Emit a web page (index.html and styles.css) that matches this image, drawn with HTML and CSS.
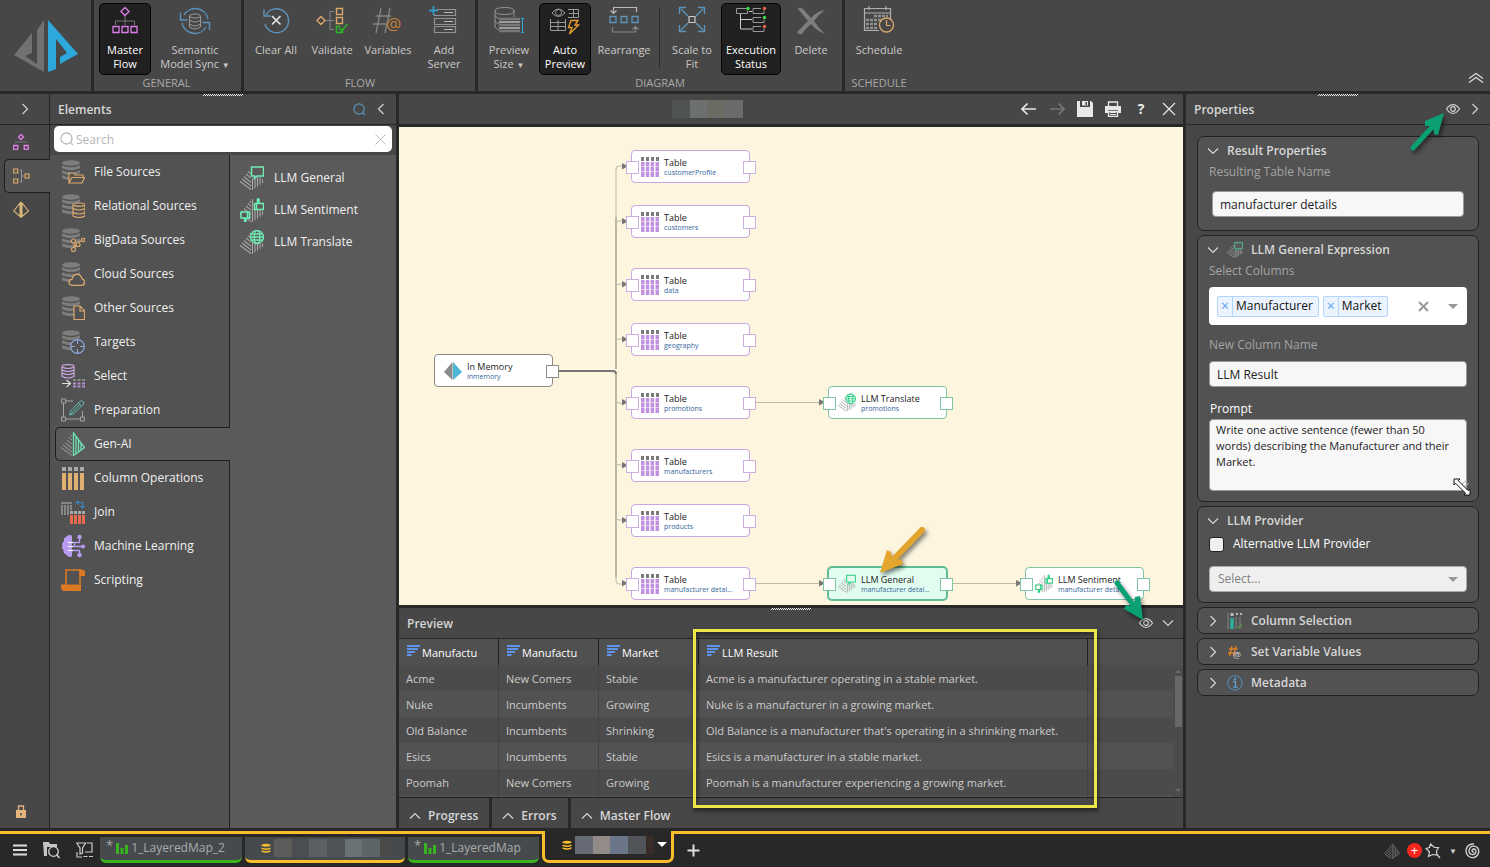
FILE: index.html
```html
<!DOCTYPE html>
<html lang="en">
<head>
<meta charset="utf-8">
<title>Data Flow</title>
<link rel="stylesheet" href="styles.css">
</head>
<body>
<svg class="defs" aria-hidden="true">
  <symbol id="db" viewBox="0 0 24 24"><g fill="#7d7d7d"><ellipse cx="10" cy="3" rx="9" ry="2.8"/><path d="M1 5.2q9 4 18 0v3q-9 4-18 0zM1 10.2q9 4 18 0v3q-9 4-18 0zM1 15.2q9 4 18 0v3q-9 4-18 0z"/></g></symbol>
  <symbol id="pyr" viewBox="0 0 24 24"><g stroke="#a5a5a5" stroke-width="1.1" fill="none"><path d="M0 15.500l11 8M2 13l9 7M4 10.700l7 5.500M6 8l5 4.200M8 5.400l3 2.800M9.700 3l1.500 1.500"/><path d="M12.500 1v23M15 10v12.200M17.500 10v10.600M20 11v7.700M22.500 13.500v3.600"/></g></symbol>
  <symbol id="pyr-full" viewBox="0 0 24 24"><g stroke="#8d8d8d" stroke-width="1.1" fill="none"><path d="M0 15.500l11 8M2 13l9 7M4 10.700l7 5.500M6 8l5 4.200M8 5.400l3 2.800M9.700 3l1.500 1.500"/></g><path d="M12.500 1v22.500l11-8zM15 4.500v17M17.500 8v11.500M20 11v6.500" fill="none" stroke="currentColor" stroke-width="1.3"/></symbol>
  <symbol id="i-general" viewBox="0 0 24 24"><g stroke="#a5a5a5" stroke-width="1.100" fill="none"><path d="M0 15.500l11 8M2 13l9 7M4 10.700l7 5.500M6 8l5 4.200M8 5.400l3 2.800"/><path d="M12.500 12v12M15 13v9.200M17.500 11v9.600M20 11v7.700M22.500 13.500v3.600"/></g><path d="M11.500 1h12v9h-6.500l-2.500 2.500V10h-3z" fill="var(--node,#5a5a5a)" stroke="currentColor" stroke-width="1.500"/></symbol>
  <symbol id="i-sentiment" viewBox="0 0 24 24"><use href="#pyr"/><path d="M14.500 5.500h3V1h1.500v4.500h4.500v6h-9zM1 14h8.500v6H6v3.500H4.500V20H1zM7.500 14v6M16.500 5.500v6" fill="var(--node,#5a5a5a)" stroke="currentColor" stroke-width="1.500"/></symbol>
  <symbol id="i-translate" viewBox="0 0 24 24"><use href="#pyr"/><circle cx="17" cy="7" r="6.500" fill="var(--node,#5a5a5a)"/><g fill="none" stroke="currentColor" stroke-width="1.300"><circle cx="17" cy="7" r="6.500"/><ellipse cx="17" cy="7" rx="2.800" ry="6.500"/><path d="M10.500 7h13M11.500 4h11M11.500 10h11"/></g></symbol>
  <symbol id="i-table" viewBox="0 0 18 20"><path d="M0 0h3v4H0zM5 0h3v4H5zM10 0h3v4h-3zM15 0h3v4h-3z" fill="#7a7a7a"/><path d="M0 5h3.500v15H0zM4.800 5h3.500v15H4.800zM9.600 5h3.500v15H9.600zM14.500 5H18v15h-3.500z" fill="#c092df"/><path d="M0 9.500h18M0 14.500h18" stroke="#fff" stroke-width=".5"/></symbol>
  <symbol id="i-eye" viewBox="0 0 14 10"><path d="M.500 5Q3.500.600 7 .600T13.500 5Q10.500 9.400 7 9.400T.500 5z" fill="none" stroke="currentColor" stroke-width="1.200"/><circle cx="7" cy="5" r="2.300" fill="none" stroke="currentColor" stroke-width="1.200"/></symbol>
  <symbol id="c-right" viewBox="0 0 12 12"><path d="M3.500 1l5 5-5 5" fill="none" stroke="currentColor" stroke-width="1.200"/></symbol>
  <symbol id="c-left" viewBox="0 0 12 12"><path d="M8.500 1l-5 5 5 5" fill="none" stroke="currentColor" stroke-width="1.200"/></symbol>
  <symbol id="c-down" viewBox="0 0 12 12"><path d="M1 3.500l5 5 5-5" fill="none" stroke="currentColor" stroke-width="1.200"/></symbol>
  <symbol id="c-up" viewBox="0 0 12 12"><path d="M1 8.500l5-5 5 5" fill="none" stroke="currentColor" stroke-width="1.200"/></symbol>
  <symbol id="i-sort" viewBox="0 0 14 12"><path d="M0 1h13M0 4h11M0 7h8M0 10h4.500" stroke="#5d93ea" stroke-width="2"/></symbol>
  <symbol id="i-glass" viewBox="0 0 14 14"><path d="M10.500 10.500L13 13M6.500 1a5.500 5.500 0 1 0 0 11 5.500 5.500 0 0 0 0-11z" fill="none" stroke="currentColor" stroke-width="1.300"/></symbol>
  <symbol id="i-coins" viewBox="0 0 10 10"><path d="M.500 1.800q4.500-2.200 9 0v1q-4.500 2-9 0zM.500 4.500q4.500 2 9 0v1.500q-4.500 2-9 0zM.500 7.300q4.500 2 9 0v1.500q-4.500 2-9 0z" fill="#fcbf2b"/></symbol>
  <symbol id="i-bars" viewBox="0 0 12 12"><path d="M0 1h3v11H0zM4.500 6h3v6h-3zM9 3h3v9H9z" fill="#37b41f"/></symbol>
</svg>

<div class="app">
  <header class="ribbon">
    <div class="brand">
      <svg width="64" height="52" viewBox="0 0 64 52"><path d="M30 0v52L0 35l18-22v20l-7 3 12 8V10z" fill="#6f7173"/><path d="M34 0l30 34-18 10v-7l7-4-11-14v30l-8 3z" fill="#2ea8da"/></svg>
    </div>
    <section class="group general">
      <div class="tools">
        <button class="tool on w52"><svg width="30" height="30" viewBox="0 0 30 30" fill="none"><path d="M15 10v5M5.500 19v-4h19v4M15 14v5" stroke="#777"/><g stroke="#df7eea" stroke-width="1.300"><path d="M15 1.500l4 4-4 4-4-4zM3 20.500h6v6H3zM12 20.500h6v6h-6zM21 20.500h6v6h-6z"/></g></svg><span>Master Flow</span></button>
        <button class="tool w78"><svg width="32" height="30" viewBox="0 0 32 30" fill="none"><g stroke="#5d93bb" stroke-width="1.400"><path d="M5 9A13 13 0 0 1 29 13M1.500 6.500V14h7M27 21A13 13 0 0 1 3 17M30.500 24v-7.500h-7"/></g><g stroke="#999"><ellipse cx="16" cy="10" rx="5.500" ry="2"/><path d="M10.500 10v11q5.500 4 11 0V10M10.500 14q5.500 4 11 0M10.500 18q5.500 4 11 0"/></g></svg><span>Semantic Model Sync&nbsp;<i class="tri">▼</i></span></button>
      </div>
      <h2>GENERAL</h2>
    </section>
    <section class="group flow">
      <div class="tools">
        <button class="tool w56"><svg width="28" height="30" viewBox="0 0 28 30" fill="none"><path d="M4 9A12 12 0 1 1 3 18M2 3.500V10h7" stroke="#5d93bb" stroke-width="1.400"/><path d="M10 10l8.500 8.500M18.500 10L10 18.500" stroke="#e8e8e8" stroke-width="1.600"/></svg><span>Clear All</span></button>
        <button class="tool w56"><svg width="32" height="30" viewBox="0 0 32 30" fill="none"><path d="M18 5.500h-4v18h4M10 14.500h8" stroke="#858585"/><path d="M5 10.500l4 4-4 4-4-4zM20.500 2.500h6v6h-6zM20.500 11.500h6v6h-6z" stroke="#dca96c" stroke-width="1.400"/><path d="M26.500 22v4.500h-6v-6h4M23 22l2.500 3 6-7" stroke="#2bb42b" stroke-width="1.500"/></svg><span>Validate</span></button>
        <button class="tool w56"><svg class="hash" width="32" height="30" viewBox="0 0 32 30" fill="none"><path d="M9 2L4 27M18 2l-5 25M3.500 10H19M1 18h13" stroke="#858585" stroke-width="1.300"/><text x="14" y="24" font-size="17" fill="#c8803c">@</text></svg><span>Variables</span></button>
        <button class="tool w56"><svg width="30" height="30" viewBox="0 0 30 30" fill="none"><path d="M8 3.500h18.500v6h-21V8M5.500 12.500h21v6h-21zM5.500 20.500h21v6h-21z" stroke="#929292" stroke-width="1.200"/><path d="M15 6.500h9M15 15.500h9M15 23.500h9" stroke="#bbb"/><path d="M4.500 0v9M0 4.500h9" stroke="#2ea8da" stroke-width="1.500"/></svg><span>Add Server</span></button>
      </div>
      <h2>FLOW</h2>
    </section>
    <section class="group diagram">
      <div class="tools">
        <button class="tool w56"><svg width="30" height="30" viewBox="0 0 30 30" fill="none"><path d="M1 5v16q2 3 4 3M1 9.500q1 2 4 3M1 15q1 2 4 3M20 4v7M1 5q0-3.500 9.500-3.500T20 5q0 3.500-9.500 3.500T1 5z" stroke="#929292"/><path d="M5 13h21M5 19h21M5 25h21" stroke="#777" stroke-width="2.500"/><path d="M5 16h21M5 22h21" stroke="#bbb" stroke-width="1.500"/><path d="M27 12.500h3M27 26.500h3M28.500 12.500v14" stroke="#2ea8da"/></svg><span>Preview Size&nbsp;<i class="tri">▼</i></span></button>
        <button class="tool on w52"><svg width="30" height="30" viewBox="0 0 30 30" fill="none"><g stroke="#9b9b9b"><path d="M2 7Q8-1 15 7 8 14 2 7z"/><circle cx="8.500" cy="6.500" r="3"/><path d="M18 3.500h10.500v8H18M19 7.500h9.500M23.500 3.500v8M.500 13v11.500h15V13M.500 16.500h15M.500 20.500h15M8 14v10.500"/></g><path d="M21 14.500h7l-3 4.500h3.500l-9 9 2.500-6.500h-3.500z" stroke="#e39a2e" stroke-width="1.400"/></svg><span>Auto Preview</span></button>
        <button class="tool w62"><svg width="30" height="30" viewBox="0 0 30 30" fill="none"><path d="M27.500 6V1.500h-23V7M1.500 4.500l3 3 3-3" stroke="#bbb" stroke-width="1.200"/><path d="M3.500 21v5h23v-5M23.500 23.500l3-3 3 3" stroke="#858585" stroke-width="1.200"/><path d="M1 10.500h6v6H1zM12 10.500h6v6h-6zM23 10.500h6v6h-6z" stroke="#5d93bb" stroke-width="1.300"/></svg><span>Rearrange</span></button>
        <hr class="split">
        <button class="tool w54"><svg width="28" height="30" viewBox="0 0 28 30" fill="none"><path d="M1.500 8V1.500H8M20 1.500h6.500V8M1.500 19v6.500H8M20 25.500h6.500V19M3 3l7 7M25 3l-7 7M3 24l7-7M25 24l-7-7" stroke="#5d93bb" stroke-width="1.400"/><path d="M11 10.500h6v6h-6z" stroke="#ccc" stroke-width="1.200"/></svg><span>Scale to Fit</span></button>
        <button class="tool on w60"><svg width="32" height="30" viewBox="0 0 32 30" fill="none"><path d="M12 2.500H1.500v5h11v-3M26 2.500h-8v5h11v-3M26 11.500h-8v5h11v-3M26 20.500h-8v5h11v-3" stroke="#999"/><path d="M5.500 8v15H17M5.500 13.500H17M14 5.500h3" stroke="#ccc"/><circle cx="13" cy="2.500" r="1.700" fill="#3ddb4a"/><circle cx="29.500" cy="2.500" r="1.700" fill="#ec6548"/><circle cx="29.500" cy="11.500" r="1.700" fill="#3ddb4a"/><circle cx="29.500" cy="20.500" r="1.700" fill="#ec6548"/></svg><span>Execution Status</span></button>
        <button class="tool w56"><svg width="30" height="30" viewBox="0 0 30 30"><path d="M2 3q1-3 5 0l8 9Q21 5 29 4q-6 4-11 11 5 8 11 13-8-3-14-10-6 5-9 10-4 1-5-2Q7 20 12 15z" fill="#7e7e7e"/></svg><span>Delete</span></button>
      </div>
      <h2>DIAGRAM</h2>
    </section>
    <section class="group schedule">
      <div class="sched">
      <div class="tools">
        <button class="tool w60"><svg width="32" height="30" viewBox="0 0 32 30" fill="none"><path d="M16 24.500H1.500v-22h26V14M1.500 7h26M6 0v4M23 0v4" stroke="#b0b0b0" stroke-width="1.200"/><path d="M11 10h14M3 14h20M3 18h12M3 22h12" stroke="#909090" stroke-width="2.500" stroke-dasharray="3 1"/><circle cx="23.500" cy="19" r="7" fill="#474747" stroke="#dca96c" stroke-width="1.300"/><path d="M23.500 14v5.500h4" stroke="#dca96c" stroke-width="1.200"/></svg><span>Schedule</span></button>
      </div>
      <h2>SCHEDULE</h2>
      </div>
      <button class="icon collapse" aria-label="Collapse ribbon"><svg width="16" height="12" viewBox="0 0 16 12"><path d="M1 6.500l7-5 7 5M1 10.500l7-5 7 5" fill="none" stroke="#ddd" stroke-width="1.200"/></svg></button>
    </section>
  </header>

  <main class="work">
    <nav class="rail">
      <button class="icon rail-top" aria-label="Expand"><svg width="12" height="12"><use href="#c-right"/></svg></button>
      <button class="icon rail-item" aria-label="Master flow"><svg width="16" height="16" viewBox="0 0 16 16" fill="none"><path d="M2.500 9V8h11v1" stroke="#777"/><path d="M8 .500l2.500 2.500L8 5.500 5.500 3zM.700 11.500h4v4h-4zM11.200 11.500h4v4h-4z" stroke="#df7eea" stroke-width="1.300"/></svg></button>
      <button class="icon rail-item sel" aria-label="Data flow"><svg width="17" height="16" viewBox="0 0 17 16" fill="none"><path d="M7 2h1.500v12H7M8.500 8H11" stroke="#999"/><path d="M.700 1h4v4h-4zM.700 11h4v4h-4zM12 6h4v4h-4z" stroke="#dca96c" stroke-width="1.200"/></svg></button>
      <button class="icon rail-item" aria-label="Model"><svg width="16" height="16" viewBox="0 0 16 16" fill="none"><path d="M7 1L.800 9 7 14.500zM9 1l6.500 8L9 14.500zM8 0v16" stroke="#d8b878" stroke-width="1.100"/></svg></button>
      <button class="icon lock" aria-label="Lock"><svg width="10" height="13" viewBox="0 0 10 13"><path d="M2.500 5V1h5v4" fill="none" stroke="#e3b57a" stroke-width="1.300"/><path d="M0 5h10v8H0z" fill="#e3b57a"/><path d="M4.300 8h1.400v2.500H4.300z" fill="#444"/></svg></button>
    </nav>

    <aside class="elements">
      <div class="grip"></div>
      <div class="panel-head"><h1>Elements</h1><button class="icon blue" aria-label="Search elements"><svg width="13" height="13"><use href="#i-glass"/></svg></button><button class="icon" aria-label="Collapse elements"><svg width="12" height="12"><use href="#c-left"/></svg></button></div>
      <div class="search"><svg width="14" height="14" viewBox="0 0 14 14"><use href="#i-glass"/></svg><input type="text" placeholder="Search" aria-label="Search"><button class="icon" aria-label="Clear search"><svg width="11" height="11" viewBox="0 0 11 11"><path d="M.500.500l10 10M10.500.500l-10 10" stroke="#bbb"/></svg></button></div>
      <div class="cols">
        <div class="cats">
          <button class="cat"><svg width="24" height="24" viewBox="0 0 24 24" fill="none"><use href="#db"/><path d="M8 23V13h5l1 2h8v2.500M8 23l3-5.500h12.500L21 23z" fill="#525252" stroke="#dca96c" stroke-width="1.200"/></svg>File Sources</button>
          <button class="cat"><svg width="24" height="24" viewBox="0 0 24 24"><use href="#db"/><path d="M12 11q0-2 6-2t6 2v11q-6 3-12 0zM12 11q6 3 12 0M12 14.500q6 3 12 0M12 18.500q6 3 12 0" fill="#525252" stroke="#dca96c" stroke-width="1.200"/></svg>Relational Sources</button>
          <button class="cat"><svg width="24" height="24" viewBox="0 0 24 24"><use href="#db"/><g fill="#525252" stroke="#dca96c" stroke-width="1.200"><path d="M13 21l3-6 6-3M13 13v8"/><circle cx="12.500" cy="13" r="2"/><circle cx="12.500" cy="21.500" r="2"/><circle cx="17" cy="16.500" r="2"/><circle cx="22" cy="12" r="1.600"/></g></svg>BigData Sources</button>
          <button class="cat"><svg width="24" height="24" viewBox="0 0 24 24"><use href="#db"/><path d="M11 23.300q-3-.3-3-3t3-3q1-5 5-5t5 4.500q2.500.500 2.500 3.500t-3 3z" fill="#525252" stroke="#dca96c" stroke-width="1.200"/></svg>Cloud Sources</button>
          <button class="cat"><svg width="24" height="24" viewBox="0 0 24 24"><use href="#db"/><path d="M13 10h6l4.500 4.500v9H13zM19 10v5h4.500" fill="#525252" stroke="#dca96c" stroke-width="1.200"/></svg>Other Sources</button>
          <button class="cat"><svg width="24" height="24" viewBox="0 0 24 24"><use href="#db"/><circle cx="16.500" cy="16.500" r="6.800" fill="#525252" stroke="#8ba9e0" stroke-width="1.200"/><path d="M16.500 10v4M16.500 19v4M10 16.500h4M19 16.500h4" stroke="#8ba9e0" stroke-width="1.200"/></svg>Targets</button>
          <button class="cat"><svg width="24" height="24" viewBox="0 0 24 24" fill="none"><path d="M1 2.500Q1 .700 7 .700t6 1.800v10q-6 3-12 0zM1 3q6 3 12 0M1 6q6 3 12 0M1 9q6 3 12 0" stroke="#cda6e4" stroke-width="1.200"/><path d="M1 19.500h8M5.500 16l4 3.500-4 3.500" stroke="#ddd" stroke-width="1.200"/><path d="M12 16h12" stroke="#8a8a8a" stroke-width="2" stroke-dasharray="3 1.500"/><path d="M12 19.500h12M12 22.500h12" stroke="#b48fd2" stroke-width="2" stroke-dasharray="3 1.500"/></svg>Select</button>
          <button class="cat"><svg width="24" height="24" viewBox="0 0 24 24" fill="none"><path d="M.600 1h4v4h-4zM.600 19h4v4h-4zM19.400 19h4v4h-4zM5 3h7M2.500 5v14M5 21h14.500M21.500 19v-6" stroke="#a5a5a5"/><path d="M8.500 17l1-4 9-9.500q2-1.500 3.500 0t0 3l-9.500 9.500zM17.500 5l3 3M10 16L19 6" stroke="#5dbfae"/></svg>Preparation</button>
          <button class="cat sel"><svg class="mint" width="24" height="24"><use href="#pyr-full"/></svg>Gen-AI</button>
          <button class="cat"><svg width="24" height="24" viewBox="0 0 24 24"><path d="M1 1h4v4H1zM7 1h4v4H7zM13 1h4v4h-4zM19 1h4v4h-4z" fill="#aaa"/><path d="M1 7h4v17H1zM7 7h4v17H7zM13 7h4v17h-4zM19 7h4v17h-4z" fill="#e0b073"/></svg>Column Operations</button>
          <button class="cat"><svg width="24" height="24" viewBox="0 0 24 24"><path d="M0 2h11v2H0zM0 5h2v10H0zM3 5h2v10H3zM6 5h2v10H6zM9 5h2v5H9z" fill="#858585"/><path d="M9 11h3v3H9zM13 11h3v3h-3zM17 11h3v3h-3zM21 11h3v3h-3z" fill="#aaa"/><path d="M9 15h3v9H9zM13 15h3v9h-3zM17 15h3v9h-3zM21 15h3v9h-3z" fill="#e86a4f"/><path d="M16 2.500h5.500V8M17.500.500l-2 2 2 2M19.500 6l2 2 2-2" fill="none" stroke="#3686c4" stroke-width="1.200"/></svg>Join</button>
          <button class="cat"><svg width="24" height="24" viewBox="0 0 24 24"><path d="M11 1.500Q7 0 5 3 2 4 3 7.500 0 9 1.500 12 0 14 2.500 16q-.5 3 2.500 4.500Q7 24 11 22.500z" fill="#b99cf2"/><path d="M7 8.500h6.500V12M7 12.500h14M7 16.500h11.500V20M11 8.500h7.500V4" fill="none" stroke="#b99cf2" stroke-width="1.300"/><path d="M7 8.500h5M7 12.500h5M7 16.500h5" stroke="#fff"/><g fill="#b99cf2"><circle cx="18.500" cy="3" r="2.200"/><circle cx="22" cy="12.500" r="2"/><circle cx="18.500" cy="21" r="2.200"/></g></svg>Machine Learning</button>
          <button class="cat"><svg width="24" height="24" viewBox="0 0 24 24" fill="none"><path d="M5 17V2h14v19.500" stroke="#db7a22" stroke-width="1.600"/><path d="M0 16.500h17V23H2q-2-1-2-6.500zM18.500 1.500Q24 1 24 4v4h-5.500zM17 17h3v6h-3z" fill="#db7a22"/></svg>Scripting</button>
        </div>
        <div class="items">
          <button class="el"><svg width="24" height="24"><use href="#i-general"/></svg>LLM General</button>
          <button class="el"><svg width="24" height="24"><use href="#i-sentiment"/></svg>LLM Sentiment</button>
          <button class="el"><svg width="24" height="24"><use href="#i-translate"/></svg>LLM Translate</button>
        </div>
      </div>
    </aside>

    <div class="center">
      <div class="doc-bar">
        <div class="doc-title"><span class="mosaic m1"></span></div>
        <button class="icon" aria-label="Back"><svg width="16" height="14" viewBox="0 0 16 14"><path d="M1 7h14M6.500 1.500L1 7l5.500 5.500" fill="none" stroke="#e8e8e8" stroke-width="1.600"/></svg></button>
        <button class="icon" aria-label="Forward"><svg width="16" height="14" viewBox="0 0 16 14"><path d="M1 7h14M9.500 1.500L15 7l-5.500 5.500" fill="none" stroke="#777" stroke-width="1.600"/></svg></button>
        <button class="icon" aria-label="Save"><svg width="16" height="16" viewBox="0 0 16 16"><path d="M0 0h3v6h10V0h1l2 2v14H0z" fill="#e8e8e8"/><path d="M5 0h6v4.500H5z" fill="#e8e8e8"/><path d="M8.500 1h1.500v3H8.500z" fill="#474747"/></svg></button>
        <button class="icon" aria-label="Print"><svg width="16" height="16" viewBox="0 0 16 16"><path d="M3.500 5V1h9v4M3.500 10.500v5h9v-5z" fill="none" stroke="#e8e8e8" stroke-width="1.300"/><path d="M0 5h16v7h-3V9H3v3H0z" fill="#e8e8e8"/><path d="M5 11.500h6M5 13.500h6" stroke="#e8e8e8"/></svg></button>
        <button class="icon help" aria-label="Help">?</button>
        <button class="icon" aria-label="Close"><svg width="14" height="14" viewBox="0 0 14 14"><path d="M1 1l12 12M13 1L1 13" stroke="#e8e8e8" stroke-width="1.200"/></svg></button>
      </div>

      <div class="canvas">
        <svg class="edges" fill="none">
          <path d="M158 244h56q3 0 3 3" stroke="#777" stroke-width="2"/>
          <path d="M217 242V90M217 247V450" stroke="#9a978c" stroke-width="1.300"/>
          <path d="M217 95V42q0-3 3-3h4M217 97q0-3 3-3h4M217 160q0-3 3-3h4M217 215q0-3 3-3h4M217 273q0 3 3 3h4M217 335q0 3 3 3h4M217 390q0 3 3 3h4M217 450v4q0 3 3 3h4M356 275.500h66M356 456.500h66M553 456.500h66" stroke="#bdb8a8"/>
          <g fill="#777"><path id="ah" d="M223 36v6.500l6-3.200z"/><use href="#ah" y="55"/><use href="#ah" y="118"/><use href="#ah" y="173"/><use href="#ah" y="236"/><use href="#ah" y="299"/><use href="#ah" y="354"/><use href="#ah" y="417"/><use href="#ah" x="197" y="236"/><use href="#ah" x="197" y="417"/><use href="#ah" x="394" y="417"/></g>
        </svg>
        <div class="node mem" style="left:35px;top:227px"><svg width="18" height="18" viewBox="0 0 18 18"><path d="M8.500 0v18L0 10z" fill="#8a8a8a"/><path d="M9 0l9 10-9 8z" fill="#4fb5d6"/></svg><p><b>In Memory</b><span>inmemory</span></p></div>
        <div class="node tbl" style="left:232px;top:23px"><svg width="18" height="20"><use href="#i-table"/></svg><p><b>Table</b><span>customerProfile</span></p></div>
        <div class="node tbl" style="left:232px;top:78px"><svg width="18" height="20"><use href="#i-table"/></svg><p><b>Table</b><span>customers</span></p></div>
        <div class="node tbl" style="left:232px;top:141px"><svg width="18" height="20"><use href="#i-table"/></svg><p><b>Table</b><span>data</span></p></div>
        <div class="node tbl" style="left:232px;top:196px"><svg width="18" height="20"><use href="#i-table"/></svg><p><b>Table</b><span>geography</span></p></div>
        <div class="node tbl" style="left:232px;top:259px"><svg width="18" height="20"><use href="#i-table"/></svg><p><b>Table</b><span>promotions</span></p></div>
        <div class="node tbl" style="left:232px;top:322px"><svg width="18" height="20"><use href="#i-table"/></svg><p><b>Table</b><span>manufacturers</span></p></div>
        <div class="node tbl" style="left:232px;top:377px"><svg width="18" height="20"><use href="#i-table"/></svg><p><b>Table</b><span>products</span></p></div>
        <div class="node tbl" style="left:232px;top:440px"><svg width="18" height="20"><use href="#i-table"/></svg><p><b>Table</b><span>manufacturer detai...</span></p></div>
        <div class="node llm" style="left:429px;top:259px"><svg width="18" height="19"><use href="#i-translate"/></svg><p><b>LLM Translate</b><span>promotions</span></p></div>
        <div class="node llm chosen" style="left:429px;top:440px"><svg width="18" height="19"><use href="#i-general"/></svg><p><b>LLM General</b><span>manufacturer detai...</span></p></div>
        <div class="node llm" style="left:626px;top:440px"><svg width="18" height="19"><use href="#i-sentiment"/></svg><p><b>LLM Sentiment</b><span>manufacturer detai...</span></p></div>
        <svg class="arrow orange" width="54" height="56" viewBox="0 0 54 56"><path d="M46 7L14 40" stroke="#e3a52b" stroke-width="6" stroke-linecap="round"/><path d="M4 50l7-23 4 2 1 9 9-2 2 5z" fill="#e3a52b"/></svg>
      </div>

      <section class="preview">
        <div class="grip"></div>
        <div class="panel-head"><h1>Preview</h1><button class="icon" aria-label="Show preview"><svg width="14" height="10"><use href="#i-eye"/></svg></button><button class="icon" aria-label="Collapse preview"><svg width="12" height="12"><use href="#c-down"/></svg></button></div>
        <div class="grid">
          <table>
            <colgroup><col class="c100"><col class="c100"><col class="c100"><col class="c389"><col></colgroup>
            <thead><tr><th><div><svg width="14" height="12"><use href="#i-sort"/></svg><span>Manufactu</span></div></th><th><div><svg width="14" height="12"><use href="#i-sort"/></svg><span>Manufactu</span></div></th><th><div><svg width="14" height="12"><use href="#i-sort"/></svg><span>Market</span></div></th><th><div><svg width="14" height="12"><use href="#i-sort"/></svg><span>LLM Result</span></div></th><th></th></tr></thead>
            <tbody>
              <tr><td>Acme</td><td>New Comers</td><td>Stable</td><td>Acme is a manufacturer operating in a stable market.</td><td></td></tr>
              <tr><td>Nuke</td><td>Incumbents</td><td>Growing</td><td>Nuke is a manufacturer in a growing market.</td><td></td></tr>
              <tr><td>Old Balance</td><td>Incumbents</td><td>Shrinking</td><td>Old Balance is a manufacturer that's operating in a shrinking market.</td><td></td></tr>
              <tr><td>Esics</td><td>Incumbents</td><td>Stable</td><td>Esics is a manufacturer in a stable market.</td><td></td></tr>
              <tr><td>Poomah</td><td>New Comers</td><td>Growing</td><td>Poomah is a manufacturer experiencing a growing market.</td><td></td></tr>
              <tr><td></td><td></td><td></td><td></td><td></td></tr>
            </tbody>
          </table>
          <div class="scroll"><i class="up"></i><i class="thumb"></i><i class="down"></i></div>
        </div>
        <div class="mark"></div>
        <svg class="arrow green2" width="44" height="54" viewBox="0 0 44 54"><path d="M9 8L29 35" stroke="#0aa074" stroke-width="5" stroke-linecap="round"/><path d="M35 45L16 34l2-4 8 1 1-9 5-1z" fill="#0aa074"/></svg>
      </section>
      <div class="dock">
        <button><svg width="12" height="12"><use href="#c-up"/></svg>Progress</button>
        <button><svg width="12" height="12"><use href="#c-up"/></svg>Errors</button>
        <button><svg width="12" height="12"><use href="#c-up"/></svg>Master Flow</button>
      </div>
    </div>

    <aside class="props">
      <div class="grip"></div>
      <div class="panel-head"><h1>Properties</h1><button class="icon" aria-label="Show properties"><svg width="14" height="10"><use href="#i-eye"/></svg></button><button class="icon" aria-label="Collapse properties"><svg width="12" height="12"><use href="#c-right"/></svg></button></div>
      <svg class="arrow green1" width="48" height="48" viewBox="0 0 48 48"><path d="M7 41L28 18" stroke="#0aa074" stroke-width="5" stroke-linecap="round"/><path d="M38 6L19 14v5l8 0 1 8 4 1z" fill="#0aa074"/></svg>
      <div class="cards">
        <section class="card">
          <button class="fold"><svg width="12" height="12"><use href="#c-down"/></svg>Result Properties</button>
          <label class="dim" for="tname">Resulting Table Name</label>
          <input class="field inset" id="tname" type="text" value="manufacturer details">
        </section>
        <section class="card">
          <button class="fold"><svg width="12" height="12"><use href="#c-down"/></svg><svg class="ico" width="16" height="16"><use href="#i-general"/></svg>LLM General Expression</button>
          <span class="dim">Select Columns</span>
          <div class="multi"><span class="chip"><button aria-label="Remove Manufacturer">×</button>Manufacturer</span><span class="chip"><button aria-label="Remove Market">×</button>Market</span><button class="icon clear" aria-label="Clear all"><svg width="11" height="11" viewBox="0 0 11 11"><path d="M1 1l9 9M10 1l-9 9" stroke="#999" stroke-width="2"/></svg></button><button class="icon" aria-label="Open list"><i class="caret"></i></button></div>
          <label class="dim gap" for="cname">New Column Name</label>
          <input class="field" id="cname" type="text" value="LLM Result">
          <label class="strong" for="prompt">Prompt</label>
          <div class="area"><textarea id="prompt" rows="4">Write one active sentence (fewer than 50 words) describing the Manufacturer and their Market.</textarea><svg class="resize" width="18" height="18" viewBox="0 0 18 18"><path d="M8 7l6-5M11 9l5-4" stroke="#aaa"/><path d="M1 1h6L5.300 2.700l10 10L17 11v6h-6l1.700-1.700-10-10L1 7z" fill="#fff" stroke="#111"/></svg></div>
        </section>
        <section class="card">
          <button class="fold"><svg width="12" height="12"><use href="#c-down"/></svg>LLM Provider</button>
          <label class="check"><input type="checkbox">Alternative LLM Provider</label>
          <div class="pick"><select aria-label="LLM provider"><option>Select...</option></select><i class="caret"></i></div>
        </section>
        <section class="card shut"><button class="fold"><svg width="12" height="12"><use href="#c-right"/></svg><svg class="ico" width="16" height="16" viewBox="0 0 16 16"><path d="M1 0v16M9 4v12M13 4v12" stroke="#6c6c6c" stroke-width="2"/><path d="M5 5v11" stroke="#2fae9c" stroke-width="3.500"/><path d="M3.500 0h3v3h-3zM9 0h2v2H9zM13 0h2v2h-2z" fill="#bbb"/><path d="M10 13l2 2 3-4" fill="none" stroke="#5d9e35"/></svg>Column Selection</button></section>
        <section class="card shut"><button class="fold"><svg width="12" height="12"><use href="#c-right"/></svg><svg class="ico hash" width="16" height="16" viewBox="0 0 16 16"><path d="M5 2L2.500 12M9 2L6.500 12M2 5h8.500M1 9h7" stroke="#db8327" stroke-width="1.300"/><text x="6" y="14" font-size="9" fill="#bbb">@</text></svg>Set Variable Values</button></section>
        <section class="card shut"><button class="fold"><svg width="12" height="12"><use href="#c-right"/></svg><svg class="ico" width="16" height="16" viewBox="0 0 16 16" fill="none"><circle cx="8" cy="8" r="7.200" stroke="#4f93c4"/><path d="M6 6.500h2.500v5.500M6 12.200h4.500" stroke="#5d9ed0" stroke-width="1.300"/><path d="M7 3h2v2H7z" fill="#5d9ed0"/></svg>Metadata</button></section>
      </div>
    </aside>
  </main>

  <footer class="taskbar">
    <div class="seg left">
      <button class="icon menu" aria-label="Menu"><svg width="14" height="12" viewBox="0 0 14 12"><path d="M0 1.500h14M0 6h14M0 10.500h14" stroke="#ddd" stroke-width="1.800"/></svg></button>
      <button class="icon menu" aria-label="Browse"><svg width="18" height="17" viewBox="0 0 18 17"><path d="M0 0h6l1 2h7v3H4v9H1z" fill="#c4c4c4"/><circle cx="10.500" cy="9.500" r="4.800" fill="#282828" stroke="#d0d0d0" stroke-width="1.300"/><path d="M13.500 12.500l3 3.500" stroke="#d0d0d0" stroke-width="1.500"/></svg></button>
      <button class="icon menu" aria-label="Filters"><svg width="17" height="16" viewBox="0 0 17 16" fill="none"><path d="M.700 1h9L6.500 6v5L4 12V6zM11 1h5v9H9M1 10v5h5M7.500 14.500h4M13 14.500h4" stroke="#ccc" stroke-width="1.200"/></svg></button>
      <button class="tab green w142"><sup>*</sup><svg width="12" height="12"><use href="#i-bars"/></svg>1_LayeredMap_2</button>
      <button class="tab gold w160" aria-label="Model tab"><svg width="10" height="10"><use href="#i-coins"/></svg><span class="mosaic m2"></span></button>
      <button class="tab green w131"><sup>*</sup><svg width="12" height="12"><use href="#i-bars"/></svg>1_LayeredMap</button>
    </div>
    <button class="live" aria-label="Current tab"><svg width="10" height="10"><use href="#i-coins"/></svg><span class="mosaic m3"></span><i class="caret white"></i></button>
    <div class="seg right">
      <button class="icon plus" aria-label="New tab"><svg width="13" height="13" viewBox="0 0 13 13"><path d="M6.500.500v12M.500 6.500h12" stroke="#ddd" stroke-width="2"/></svg></button>
      <svg class="dimpyr" width="16" height="16"><use href="#pyr-full"/></svg>
      <button class="badge" aria-label="Add">+</button>
      <button class="icon" aria-label="Pin"><svg width="16" height="16" viewBox="0 0 16 16" fill="none"><path d="M5.500 1l4 3.500h4L11.500 8l.5 4-4.500-.5-4 2 1-4.500L1 5.500 4.500 4.500zM11.500 11L15 15" stroke="#d5d5d5" stroke-width="1.200"/></svg></button>
      <button class="icon more" aria-label="More"><i class="tri">▼</i></button>
      <button class="icon" aria-label="Assistant"><svg width="16" height="16" viewBox="0 0 16 16" fill="none"><path d="M9 8.500Q8 9.500 7.200 8.500 6.500 6.500 8.500 6q3 .2 2.500 3-1 3-4 2.500Q3.500 10.500 4 7q1.300-4 5-3.800Q14 4 13.800 9 12.500 14.500 7.500 14.800 1.500 14 1 8 1.200 2 7 1l2-.2" stroke="#d5d5d5" stroke-width="1.300"/></svg></button>
    </div>
  </footer>
</div>
</body>
</html>
```
FILE: styles.css
```css
*{box-sizing:border-box;margin:0;padding:0}
body{font:12px/16px "Open Sans","Noto Sans",sans-serif;color:#d6d6d6;background:#282828}
button,input,textarea,select{font:inherit;color:inherit;border:0;background:none}
button{display:flex;align-items:center;justify-content:center}
svg{display:block;flex:none}
h1,h2{font-size:11px;font-weight:600}
.defs{position:absolute;width:0;height:0}
.app{height:100vh;display:flex;flex-direction:column;background:#282828;overflow:hidden}
.icon{min-width:16px;height:20px;color:#d0d0d0}
.hash text{font-family:"Open Sans",sans-serif}

/* ribbon */
.ribbon{display:flex;gap:3px;margin-bottom:3px}
.brand{width:91px;background:#474747;display:flex;align-items:center;justify-content:center}
.group{background:#474747;padding:3px 3px 0 4px;display:flex;flex-direction:column;height:91px}
.general{padding-left:5px;padding-right:7px}
.group h2{font-size:11px;line-height:16px;font-weight:400;color:#a9a9a9;text-align:center}
.tools{display:flex;gap:2px;height:72px}
.general .tools{gap:5px}
.flow .tools{gap:0}
.tool{flex-direction:column;justify-content:flex-start;font-size:11px;line-height:14px;padding-top:2px;gap:7px;border:1px solid transparent;border-radius:5px;color:#c9c9c9}
.tool.on{background:#202020;border-color:#050505;color:#fff}
.tri{display:inline-block;font-style:normal;font-size:8px;line-height:8px}
.w52{width:52px}.w54{width:54px}.w56{width:56px}.w60{width:60px}.w62{width:62px}.w78{width:78px}
.diagram{padding-left:3px}
.split{width:1px;height:60px;border:0;background:#2c2c2c;margin:5px 3px 0 2px}
.schedule{flex:1;flex-direction:row;justify-content:space-between;align-items:flex-end;padding-right:6px}
.sched{height:88px}
.collapse{margin-bottom:3px}

/* work area */
.work{flex:1;min-height:0;display:flex}
.rail{width:50px;background:#474747;border-right:1px solid #252525;display:flex;flex-direction:column}
.rail-top{height:31px;border-bottom:1px solid #252525}
.rail-item{height:34px;margin-left:4px;padding-right:12px;border:1px solid transparent;border-right:0}
.rail-item.sel{background:#525252;border-color:#1f1f1f;border-radius:5px 0 0 5px;margin-right:-1px}
.lock{margin:auto 8px 7px 0}
.panel-head{height:31px;padding:0 7px 0 8px;display:flex;align-items:center;gap:6px;border-bottom:1px solid #252525}
.panel-head h1{flex:1;font-size:12px;padding-top:2px}
.grip{position:absolute;top:0;left:calc(50% - 20px);width:40px;height:2px;background:conic-gradient(#eee 25%,transparent 0 50%,#eee 0 75%,transparent 0) 0 0/2px 2px}
.elements{position:relative;width:346px;background:#474747;display:flex;flex-direction:column}
.blue{color:#5d93bb}
.search{display:flex;align-items:center;gap:2px;height:26px;margin:1px 4px 3px;padding:0 4px 0 6px;background:#fff;border-radius:5px;color:#bbb}
.search input{flex:1;min-width:0;outline:0;padding-top:2px}
.search input::placeholder{color:#b5b5b5}
.cols{flex:1;display:flex}
.cats{width:180px;background:#525252;border-right:1px solid #1f1f1f;padding-left:5px}
.cat{width:calc(100% + 1px);height:34px;justify-content:flex-start;gap:9px;padding-left:5px;border:1px solid transparent;border-right:0;color:#f0f0f0}
.cat.sel{background:#5a5a5a;border-color:#1f1f1f;border-radius:5px 0 0 5px}
.mint{color:#6fe3b4}
.items{flex:1;background:#5a5a5a;padding:7px 0 0 10px}
.el{height:32px;gap:10px;color:#f0f0f0}
.el svg{color:#70ecb5}
.center{flex:1;min-width:0;margin:0 3px;display:flex;flex-direction:column}
.doc-bar{height:30px;background:#474747;display:flex;align-items:center;margin-bottom:3px}
.doc-title{flex:1;display:flex;justify-content:center}
.doc-bar .icon{width:28px}
.help{font-weight:700;font-size:14px;color:#eee}
.mosaic{height:18px}
.m1{width:71px;background:linear-gradient(90deg,#505354 0 18px,#6d7071 0 35px,#6a6b63 0 53px,#6a6b6c 0)}
.m2{width:116px;background:linear-gradient(90deg,#5c5c5b 0 18px,#4b4f51 0 35px,#5a6064 0 53px,#4e5356 0 71px,#697274 0 88px,#5d6569 0 106px,#4b4c4a 0)}
.m3{width:79px;background:linear-gradient(90deg,#666b75 0 18px,#938b88 0 35px,#6b7788 0 53px,#515559 0 71px,#382b28 0)}

/* flow diagram */
.canvas{position:relative;flex:1;background:#fdf5dd;overflow:hidden;margin-bottom:3px}
.edges{position:absolute;left:0;top:0;width:100%;height:100%}
.node{position:absolute;width:119px;height:33px;display:flex;align-items:center;gap:5px;padding-left:9px;background:#fff;border:1px solid #c9a7e0;border-radius:4px}
.node::before,.node::after{content:"";position:absolute;top:10px;width:11px;height:11px;background:#fff;border:1px solid var(--line,#cdb0e2)}
.node::before{left:-6px}
.node::after{right:-7px}
.node p{line-height:10px;padding-top:2px;white-space:nowrap}
.node b{display:block;font-weight:400;font-size:9px;color:#222}
.node span{display:block;font-size:7px;line-height:9px;color:#34659c}
.mem{border-color:#8a8a8a;--line:#8a8a8a}
.mem::before{display:none}
.llm{border-color:#7fc4a4;--line:#7fc4a4;--node:#fff}
.llm svg{color:#2fcf84}
.chosen{background:#e2fdf0;--node:#e2fdf0;border-color:#5fbd96;box-shadow:0 0 0 1px #5fbd96}
.arrow{position:absolute;z-index:3;filter:drop-shadow(2px 3px 2px rgba(0,0,0,.5));fill:none;pointer-events:none}
.orange{left:477px;top:396px}
.green1{right:36px;top:13px}
.green2{right:31px;top:-33px}

/* preview */
.preview{position:relative;background:#474747}
.grid{position:relative;height:159px;overflow:hidden;border-bottom:1px solid #252525}
table{width:100%;table-layout:fixed;border-collapse:separate;border-spacing:0}
.c100{width:100px}
.c389{width:389px}
th,td{height:26px;text-align:left;font-size:11px;font-weight:400;white-space:nowrap}
th{background:#505050;border-right:1px solid #1f1f1f;color:#fff;padding-top:1px}
th div{display:flex;gap:1px;padding-left:8px}
td{padding:1px 7px 0;border-right:1px solid #424242;color:#cbcbcb}
th:last-child,td:last-child{border-right:0}
tbody tr{background:#4b4b4b}
tbody tr:nth-child(even){background:#525252}
.scroll{position:absolute;right:0;top:26px;bottom:0;width:10px;background:#4b4b4b;display:flex;flex-direction:column;align-items:center;padding:5px 0}
.up,.down{border:3px solid transparent;border-top:0;border-bottom-color:#6a6a6a}
.down{border-top:3px solid #6a6a6a;border-bottom:0;margin-top:auto}
.thumb{width:7px;height:51px;margin-top:3px;background:#686868}
.mark{position:absolute;z-index:2;left:294px;top:21px;width:404px;height:179px;border:3px solid #ede64b;box-shadow:1px 3px 4px rgba(0,0,0,.5),inset 1px 3px 4px rgba(0,0,0,.4);pointer-events:none}
.dock{display:flex;gap:3px;height:30px}
.dock button{background:#474747;padding:6px 11px 0 10px;gap:7px;font-weight:600}
.dock button:last-child{flex:1;justify-content:flex-start}

/* properties */
.props{position:relative;width:304px;background:#474747}
.cards{padding:11px 11px 0;display:flex;flex-direction:column;gap:4px}
.card{border:1px solid #222;border-radius:7px;background:#525252;padding:0 11px 10px;display:flex;flex-direction:column}
.fold{justify-content:flex-start;gap:8px;height:27px;margin-left:-2px;padding-top:1px;font-weight:600}
.ico{color:#4fbf93}
.dim{color:#a4a4a4;padding-bottom:8px}
.dim.gap{padding-top:12px}
.strong{color:#fff;padding:14px 0 2px 1px}
.field{height:26px;padding:0 7px;background:#f7f7f7;border:1px solid #999;border-radius:4px;color:#222;width:100%}
.inset{width:auto;margin:3px 3px 3px}
.multi{height:38px;display:flex;align-items:center;gap:4px;background:#fff;border-radius:4px;padding:0 6px 0 8px;color:#111}
.chip{display:flex;align-items:center;height:21px;border:1px solid #b3d4fb;background:#ebf3fe;border-radius:2px;padding-right:5px}
.chip button{width:15px;height:19px;border-right:1px solid #b3d4fb;color:#5aa2f5;font-size:14px;margin-right:3px}
.clear{margin:0 10px 0 auto}
.caret{border:5px solid transparent;border-top-color:#999;border-bottom:0}
.white{border-top-color:#fff}
.area{position:relative}
textarea{display:block;width:100%;height:72px;padding:2px 6px;font-size:11px;line-height:16px;background:#f7f7f7;border:1px solid #999;border-radius:4px;color:#222;resize:none;overflow:hidden}
.resize{position:absolute;right:-4px;bottom:-5px}
.check{display:flex;align-items:center;gap:9px;height:20px;color:#fff}
.check input{appearance:none;width:15px;height:15px;background:#f0f0f0;border:1px solid #222;border-radius:3px}
.pick{position:relative;margin-top:12px}
.pick select{display:block;appearance:none;width:100%;height:26px;padding:0 8px;background:#efefef;border:1px solid #aaa;border-radius:4px;color:#808080}
.pick .caret{position:absolute;right:9px;top:11px;pointer-events:none}
.shut{padding-bottom:0}
.shut .fold{height:25px}

/* task bar */
.taskbar{display:flex;height:36px;margin-top:3px}
.seg{border-top:3px solid #fcbf2b;display:flex;align-items:flex-start;padding-top:3px}
.left{padding:3px 3px 0 4px;gap:3px}
.menu{width:32px;height:26px;margin-right:-3px}
.tab{height:26px;background:#464a4c;border-bottom:3px solid;border-radius:0 0 6px 6px;justify-content:flex-start;padding:0 6px 2px;gap:3px;color:#a9abad}
.tab sup{font-size:13px;line-height:16px;align-self:flex-start}
.green{border-color:#37b41f}
.gold{border-color:#fcbf2b;padding-left:16px}
.w142{width:142px}.w160{width:160px}.w131{width:131px}
.live{height:32px;width:132px;border:3px solid #fcbf2b;border-top:0;border-radius:0 0 7px 7px;gap:3px;padding:0 0 2px 13px}
.right{flex:1;align-items:center;padding:0 9px 0 11px;gap:7px}
.plus{margin-right:auto}
.dimpyr{color:#6c6c6c}
.badge{width:15px;height:15px;border-radius:50%;background:#f5271d;color:#fff;font-size:13px;line-height:13px}
.right .badge + .icon{margin-left:-4px}
.more{min-width:10px}
```
